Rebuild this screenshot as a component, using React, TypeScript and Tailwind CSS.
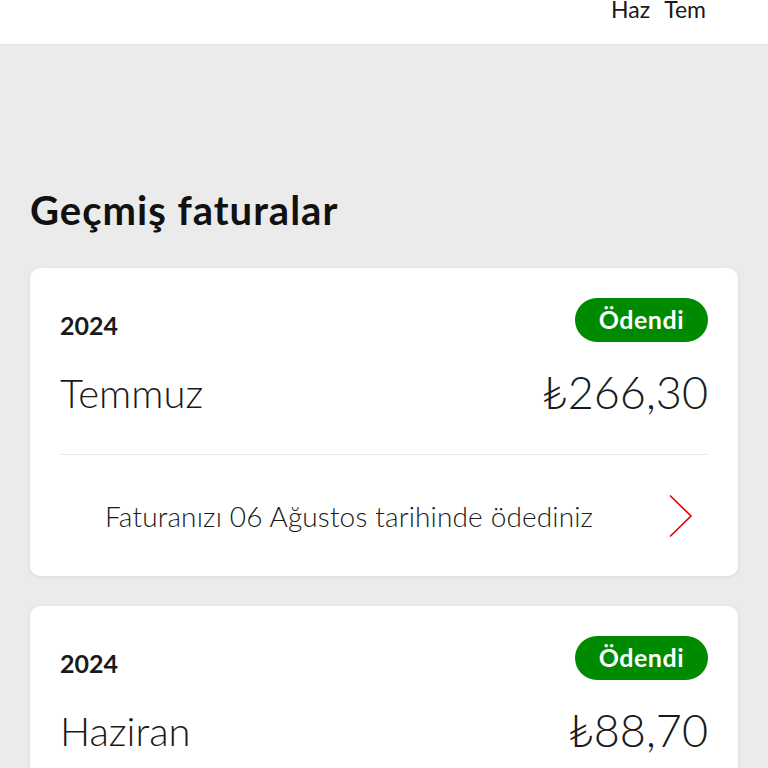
import React from 'react';

interface Bill {
  year: string;
  month: string;
  amount: string;
  note?: string;
}

const bills: Bill[] = [
  { year: '2024', month: 'Temmuz', amount: '266,30', note: 'Faturanızı 06 Ağustos tarihinde ödediniz' },
  { year: '2024', month: 'Haziran', amount: '88,70', note: 'Faturanızı 08 Temmuz tarihinde ödediniz' },
];

const Chevron = () => (
  <svg width="26" height="44" viewBox="0 0 26 44" fill="none" className="shrink-0">
    <path d="M2 1.5 L23 22 L2 42.5" stroke="#e60000" strokeWidth="1.6" strokeLinejoin="miter" />
  </svg>
);

const BillCard: React.FC<{ bill: Bill }> = ({ bill }) => (
  <div className="bg-white rounded-[10px] shadow-[0_1px_4px_rgba(0,0,0,0.08)] px-[30px] pt-[30px]">
    <div className="flex items-center justify-between h-[44px]">
      <span className="text-[25px] font-bold text-[#1a1a1a] mt-[12px]">{bill.year}</span>
      <span className="bg-[#008a00] text-white text-[25px] tracking-[0.5px] font-bold rounded-full h-[44px] px-[24px] flex items-center">
        Ödendi
      </span>
    </div>
    <div className="flex items-center justify-between mt-[28px] pb-[39px] border-b border-[#e6e6e6]">
      <span className="text-[40px] font-light text-[#1a1a1a] leading-none">{bill.month}</span>
      <span className="text-[45px] font-light text-[#1a1a1a] leading-none">₺{bill.amount}</span>
    </div>
    <div className="flex items-center justify-between pl-[45px] pr-[14px] h-[121px]">
      <span className="text-[28px] font-light text-[#1a1a1a] tracking-[0.15px]">{bill.note}</span>
      <Chevron />
    </div>
  </div>
);

export default function App() {
  return (
    <div className="w-[768px] h-[768px] overflow-hidden bg-[#ebebeb]" style={{ fontFamily: 'Lato, "Open Sans", sans-serif' }}>
      <div className="bg-white h-[44px] flex justify-end pr-[62px] gap-[14px] shadow-[0_1px_2px_rgba(0,0,0,0.04)]">
        <span className="text-[23px] text-[#1a1a1a] -mt-[11px] leading-[40px]">Haz</span>
        <span className="text-[23px] text-[#1a1a1a] -mt-[11px] leading-[40px]">Tem</span>
      </div>
      <div className="px-[30px]">
        <h2 className="text-[40px] font-bold text-[#111] mt-[146px] leading-none tracking-[1px]">Geçmiş faturalar</h2>
        <div className="flex flex-col gap-[30px] mt-[38px]">
          {bills.map((b, i) => (
            <BillCard key={i} bill={b} />
          ))}
        </div>
      </div>
    </div>
  );
}
